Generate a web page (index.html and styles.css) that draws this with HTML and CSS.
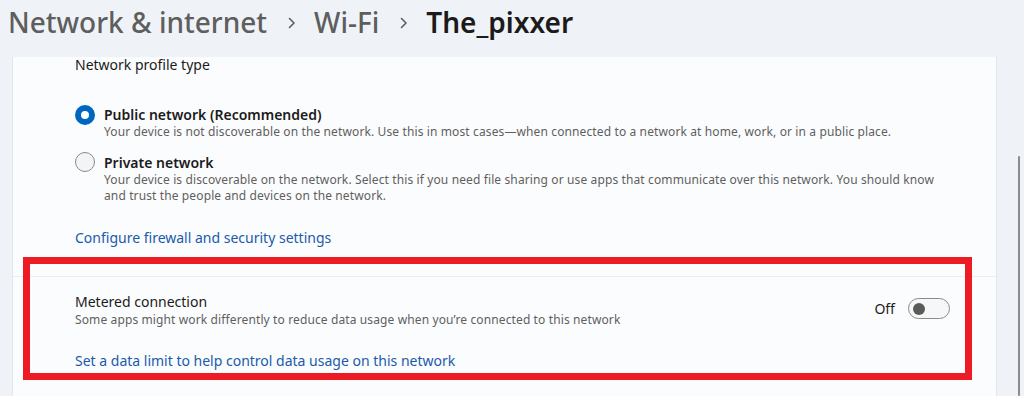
FILE: index.html
```html
<!DOCTYPE html>
<html>
<head>
<meta charset="utf-8">
<link rel="stylesheet" href="styles.css">
</head>
<body>
<header class="crumbs">
  <span class="crumb">Network &amp; internet</span>
  <svg class="chev" width="8" height="12" viewBox="0 0 8 12"><path d="M1.5 1.5 L6 6 L1.5 10.5" fill="none" stroke="#5e5e5e" stroke-width="1.6" stroke-linecap="round" stroke-linejoin="round"/></svg>
  <span class="crumb">Wi-Fi</span>
  <svg class="chev" width="8" height="12" viewBox="0 0 8 12"><path d="M1.5 1.5 L6 6 L1.5 10.5" fill="none" stroke="#5e5e5e" stroke-width="1.6" stroke-linecap="round" stroke-linejoin="round"/></svg>
  <span class="crumb current">The_pixxer</span>
</header>
<main class="page">
  <section class="card">
    <div class="profile">
      <div class="profile-title">Network profile type</div>
      <div class="radio-row first">
        <span class="radio checked"></span>
        <div class="radio-text">
          <div class="radio-title">Public network (Recommended)</div>
          <div class="desc">Your device is not discoverable on the network. Use this in most cases—when connected to a network at home, work, or in a public place.</div>
        </div>
      </div>
      <div class="radio-row second">
        <span class="radio"></span>
        <div class="radio-text">
          <div class="radio-title">Private network</div>
          <div class="desc">Your device is discoverable on the network. Select this if you need file sharing or use apps that communicate over this network. You should know and trust the people and devices on the network.</div>
        </div>
      </div>
      <a class="link firewall">Configure firewall and security settings</a>
    </div>
    <div class="metered">
      <div class="metered-row">
        <div class="metered-text">
          <div class="item-title">Metered connection</div>
          <div class="desc">Some apps might work differently to reduce data usage when you’re connected to this network</div>
        </div>
        <div class="toggle-wrap">
          <span class="toggle-label">Off</span>
          <span class="toggle"><span class="knob"></span></span>
        </div>
      </div>
      <a class="link limit">Set a data limit to help control data usage on this network</a>
    </div>
  </section>
  <div class="scroll-track"><div class="scroll-thumb"></div></div>
</main>
<div class="highlight"></div>
</body>
</html>
```
FILE: styles.css
```css
html, body {
  margin: 0;
  padding: 0;
}
body {
  width: 1024px;
  height: 396px;
  overflow: hidden;
  background: #eff3f7;
  font-family: "Segoe UI", "Noto Sans", "Open Sans", sans-serif;
  color: #1b1b1b;
  position: relative;
}
.crumbs {
  height: 42px;
  margin-bottom: 15px;
  display: flex;
  align-items: baseline;
  padding-left: 8px;
  box-sizing: border-box;
  padding-top: 2px;
  font-size: 28px;
  line-height: 40px;
  font-weight: 500;
  color: #5e5e5e;
}
.chev {
  align-self: center;
  margin: 2px 18px 0 21px;
}
.crumb.current {
  color: #1b1b1b;
  font-weight: 600;
}
.page {
  display: flex;
  height: 339px;
}
.card {
  width: 985px;
  margin-left: 12px;
  background: #fbfcfd;
  border-left: 1px solid #e3e6ea;
  border-right: 1px solid #e3e6ea;
  box-sizing: border-box;
}
.profile {
  padding: 0 0 28px 62px;
  border-bottom: 1px solid #eceef1;
}
.profile-title {
  font-size: 14px;
  line-height: 20px;
  margin-top: -2px;
}
.radio-row {
  display: flex;
  align-items: flex-start;
}
.radio-row.first {
  margin-top: 29px;
}
.radio-row.second {
  margin-top: 12px;
}
.radio {
  flex: none;
  width: 20px;
  height: 20px;
  border-radius: 50%;
  box-sizing: border-box;
  border: 1px solid #8a8a8a;
  background: #f3f4f6;
  margin-right: 9px;
}
.radio.checked {
  border: 6px solid #0067c0;
  background: #ffffff;
  margin-top: 1px;
}
.radio-title {
  font-size: 14px;
  line-height: 20px;
  font-weight: 600;
  margin-top: 1px;
}
.desc {
  font-size: 12px;
  line-height: 16px;
  letter-spacing: 0.12px;
  color: #5f5f5f;
}
.radio-text .desc {
  margin-top: -1px;
}
.radio-row.second .desc {
  width: 852px;
}
.link {
  display: block;
  color: #1a5aab;
  font-size: 14px;
  line-height: 20px;
  cursor: pointer;
}
.link.firewall {
  margin-top: 24px;
}
.metered {
  padding: 15px 46px 0 62px;
}
.metered-row {
  display: flex;
  align-items: center;
  justify-content: space-between;
}
.item-title {
  font-size: 14px;
  line-height: 20px;
}
.toggle-wrap {
  display: flex;
  align-items: center;
  margin-top: -3px;
}
.toggle-label {
  font-size: 14px;
  line-height: 20px;
  margin-right: 13px;
}
.toggle {
  width: 42px;
  height: 21px;
  border-radius: 11px;
  border: 1px solid #8a8a8a;
  background: #f6f7f8;
  box-sizing: border-box;
  display: flex;
  align-items: center;
  padding-left: 4px;
}
.knob {
  width: 12px;
  height: 12px;
  border-radius: 50%;
  background: #5a5a5a;
}
.link.limit {
  margin-top: 23px;
}
.scroll-track {
  flex: 1;
  display: flex;
  justify-content: flex-end;
  padding-right: 4px;
}
.scroll-thumb {
  width: 2px;
  margin-top: 99px;
  background: #8c8c8c;
  border-radius: 1px;
}
.highlight {
  position: absolute;
  left: 23px;
  top: 257px;
  width: 949px;
  height: 123px;
  box-sizing: border-box;
  border: 7px solid #ed1c24;
}
```
